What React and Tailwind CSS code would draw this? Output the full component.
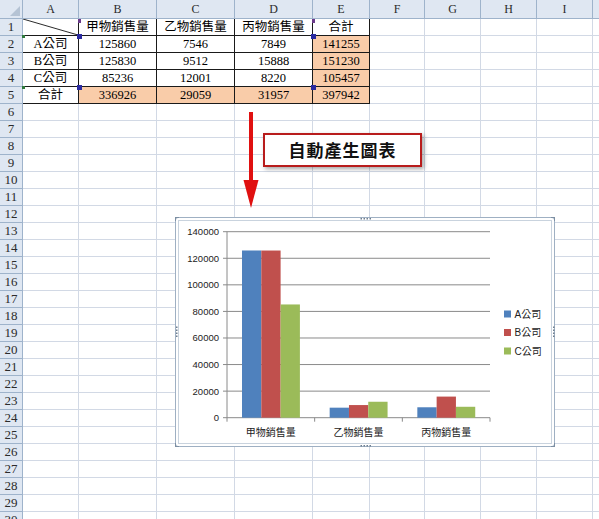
import React from 'react';

const COLS = ['A', 'B', 'C', 'D', 'E', 'F', 'G', 'H', 'I', 'J'];

const TABLE = {
  1: ['', '甲物銷售量', '乙物銷售量', '丙物銷售量', '合計'],
  2: ['A公司', '125860', '7546', '7849', '141255'],
  3: ['B公司', '125830', '9512', '15888', '151230'],
  4: ['C公司', '85236', '12001', '8220', '105457'],
  5: ['合計', '336926', '29059', '31957', '397942'],
};

const SERIES = [
  { name: 'A公司', color: '#4f81bd', values: [125860, 7546, 7849] },
  { name: 'B公司', color: '#c0504d', values: [125830, 9512, 15888] },
  { name: 'C公司', color: '#9bbb59', values: [85236, 12001, 8220] },
];
const CATEGORIES = ['甲物銷售量', '乙物銷售量', '丙物銷售量'];

const isPeach = (row, col) => (col === 4 && row >= 2 && row <= 5) || (row === 5 && col >= 1 && col <= 4);

function Cell({ row, col }) {
  const inTable = row <= 5 && col <= 4;
  const text = inTable ? TABLE[row][col] : '';
  let cls = 'relative flex items-center justify-center border-r border-b text-[12.5px] leading-none text-black whitespace-nowrap overflow-hidden ';
  cls += inTable ? 'border-[#1a1a1a] ' : 'border-[#d2d9e5] ';
  cls += isPeach(row, col) ? 'bg-[#f9cca9]' : 'bg-white';
  return (
    <div className={cls}>
      {row === 1 && col === 0 && (
        <svg className="absolute inset-0 w-full h-full" preserveAspectRatio="none" viewBox="0 0 56 17">
          <line x1="0" y1="0" x2="56" y2="17" stroke="#222" strokeWidth="1" />
        </svg>
      )}
      {text}
    </div>
  );
}

function Chart() {
  const x0 = 51, x1 = 314, yTop = 13.7, yBase = 199.7;
  const scale = (yBase - yTop) / 140000;
  const catW = (x1 - x0) / 3;
  const barW = 19.3;
  const ticks = [0, 20000, 40000, 60000, 80000, 100000, 120000, 140000];
  return (
    <svg className="absolute inset-0" width="380" height="230" viewBox="0 0 380 230">
      {ticks.map((t) => {
        const y = yBase - t * scale;
        return (
          <g key={t}>
            <line x1={x0 - 4} y1={y} x2={x1} y2={y} stroke="#8a8a8a" strokeWidth="1" />
            <text x="43" y={y + 3.5} textAnchor="end" fontSize="9.5" fill="#222" fontFamily="Liberation Sans, Arial, sans-serif">
              {t}
            </text>
          </g>
        );
      })}
      <line x1={x0} y1={yTop} x2={x0} y2={yBase} stroke="#8a8a8a" strokeWidth="1" />
      {[0, 1, 2, 3].map((i) => (
        <line key={i} x1={x0 + i * catW} y1={yBase} x2={x0 + i * catW} y2={yBase + 4} stroke="#8a8a8a" strokeWidth="1" />
      ))}
      {CATEGORIES.map((c, ci) =>
        SERIES.map((s, si) => {
          const h = s.values[ci] * scale;
          return <rect key={c + si} x={x0 + ci * catW + 15 + si * barW} y={yBase - h} width={barW} height={h} fill={s.color} />;
        })
      )}
      {CATEGORIES.map((c, ci) => (
        <text key={c} x={x0 + ci * catW + catW / 2} y="217.5" textAnchor="middle" fontSize="10" fill="#222" fontFamily="Noto Sans CJK TC, sans-serif">
          {c}
        </text>
      ))}
      {SERIES.map((s, i) => (
        <g key={s.name}>
          <rect x="328" y={92.5 + i * 18.5} width="7" height="7" fill={s.color} />
          <text x="338.5" y={99.5 + i * 18.5} fontSize="10" fill="#222" fontFamily="Liberation Sans, Noto Sans CJK TC, sans-serif">
            {s.name}
          </text>
        </g>
      ))}
    </svg>
  );
}

function Dots({ vertical, className }) {
  return (
    <svg className={'absolute ' + className} width={vertical ? 3 : 12} height={vertical ? 12 : 3}>
      {[0, 1, 2, 3].map((i) => (
        <rect key={i} x={vertical ? 1 : i * 3 + 0.5} y={vertical ? i * 3 + 0.5 : 1} width="1.5" height="1.5" fill="#6f7f90" />
      ))}
    </svg>
  );
}

export default function App() {
  const rows = Array.from({ length: 30 }, (_, i) => i + 1);
  return (
    <div className="relative w-[599px] h-[519px] overflow-hidden bg-white" style={{ fontFamily: '"Liberation Serif", "Noto Sans CJK TC", serif' }}>
      <div className="grid w-max grid-cols-[23px_56px_78px_78px_78px_57px_55px_56px_56px_56px_56px] grid-rows-[19px_repeat(30,17px)]">
        <div className="relative bg-[#dfe7f2] border-r border-b border-[#9eb3cb]">
          <svg className="absolute right-[2px] bottom-[2px]" width="10" height="10">
            <polygon points="10,0 10,10 0,10" fill="#b5c3d4" />
          </svg>
        </div>
        {COLS.map((c) => (
          <div key={c} className="flex items-center justify-center bg-[#dfe7f2] border-r border-b border-[#9eb3cb] text-[12px] text-[#2b2b2b]">
            {c}
          </div>
        ))}
        {rows.map((r) => (
          <React.Fragment key={r}>
            <div className="flex items-center justify-center bg-[#dfe7f2] border-r border-b border-[#9eb3cb] text-[13px] text-[#2b2b2b]">
              {r}
            </div>
            {COLS.map((c, ci) => (
              <Cell key={c} row={r} col={ci} />
            ))}
          </React.Fragment>
        ))}
      </div>

      {/* chart data range markers */}
      <div className="absolute left-[77px] top-[34px] w-[5px] h-[5px] bg-[#2a2aa0]" />
      <div className="absolute left-[77px] top-[85px] w-[5px] h-[5px] bg-[#2a2aa0]" />
      <div className="absolute left-[311px] top-[34px] w-[5px] h-[5px] bg-[#2a2aa0]" />
      <div className="absolute left-[311px] top-[85px] w-[5px] h-[5px] bg-[#2a2aa0]" />
      <div className="absolute left-[78px] top-[19px] w-[3px] h-[4px] bg-[#6a3a8a]" />
      <div className="absolute left-[312px] top-[19px] w-[3px] h-[4px] bg-[#6a3a8a]" />
      <div className="absolute left-[22px] top-[35px] w-[3px] h-[3px] bg-[#2f7a3c]" />
      <div className="absolute left-[22px] top-[86px] w-[3px] h-[3px] bg-[#2f7a3c]" />

      {/* arrow */}
      <svg className="absolute left-[242px] top-[112px]" width="18" height="98">
        <rect x="7" y="0" width="4" height="72" fill="#e01010" />
        <polygon points="1.5,68 16.5,68 9,96" fill="#e01010" />
      </svg>

      {/* callout */}
      <div className="absolute left-[263px] top-[133px] w-[159px] h-[34px] flex items-center justify-center bg-white border-2 border-[#b81c1c] shadow-[2px_2px_4px_rgba(0,0,0,0.35)]">
        <span className="text-[17px] font-bold text-[#111] tracking-[1px]" style={{ fontFamily: '"Noto Sans CJK TC", sans-serif' }}>
          自動產生圖表
        </span>
      </div>

      {/* chart object */}
      <div className="absolute left-[175px] top-[217px] w-[380px] h-[230px] rounded-[3px] border border-[#9fb0c3] bg-white p-[2px]">
        <div className="w-full h-full border border-[#c9d3de] bg-white" />
        <Chart />
        <Dots className="left-[184px] top-[-1px]" />
        <Dots className="left-[184px] bottom-[-1px]" />
        <Dots vertical className="left-[-1px] top-[108px]" />
        <Dots vertical className="right-[-1px] top-[108px]" />
        <div className="absolute left-[-1px] top-[-1px] w-[4px] h-[4px] border-l border-t border-[#7d8fa3]" />
        <div className="absolute right-[-1px] top-[-1px] w-[4px] h-[4px] border-r border-t border-[#7d8fa3]" />
        <div className="absolute left-[-1px] bottom-[-1px] w-[4px] h-[4px] border-l border-b border-[#7d8fa3]" />
        <div className="absolute right-[-1px] bottom-[-1px] w-[4px] h-[4px] border-r border-b border-[#7d8fa3]" />
      </div>
    </div>
  );
}
